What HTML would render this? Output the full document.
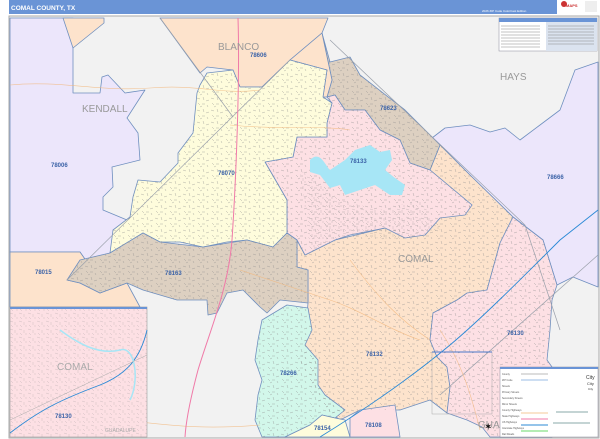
<!DOCTYPE html>
<html><head><meta charset="utf-8"><style>
html,body{margin:0;padding:0;background:#fff;}
body{width:600px;height:439px;overflow:hidden;position:relative;font-family:"Liberation Sans",sans-serif;}
svg{position:absolute;left:0;top:0;}
</style></head><body>
<svg width="600" height="439" viewBox="0 0 600 439" xmlns="http://www.w3.org/2000/svg" font-family="Liberation Sans, sans-serif">
<defs>
<pattern id="st" width="14" height="12" patternUnits="userSpaceOnUse">
<g stroke="#8a8a8a" stroke-width="0.45" fill="none" opacity="0.75">
<path d="M1,2 l3,1"/><path d="M7,1 l1,3"/><path d="M10,5 l3,-1"/><path d="M2,7 l2,2"/><path d="M6,8 l3,0"/><path d="M11,9 l1,2"/><path d="M4,11 l2,-1"/>
</g>
</pattern>
<pattern id="st2" width="9" height="8" patternUnits="userSpaceOnUse">
<g stroke="#888" stroke-width="0.45" fill="none" opacity="0.8">
<path d="M1,1 l3,1"/><path d="M6,2 l0,3"/><path d="M2,5 l2,2"/><path d="M7,6 l2,0"/>
</g>
</pattern>
</defs>
<rect x="0" y="0" width="600" height="439" fill="#fff"/>
<rect x="9" y="16" width="590" height="422" fill="#f2f2f2" stroke="#aaa" stroke-width="1"/>
<g stroke="#6f8fbf" stroke-width="0.8" stroke-linejoin="round">
<polygon fill="#ece6fb" points="10,18 73,18 73,93 100,93 102,77 108,75 125,93 145,90 127,118 138,133 140,160 112,167 113,187 103,197 103,210 127,220 110,253 87,262 80,252 10,252"/>
<polygon fill="#fde3cc" points="10,252 80,252 87,262 67,280 80,283 100,293 127,283 140,307 10,307"/>
<polygon fill="#fde3cc" points="160,18 328,18 322,33 290,60 262,87 240,87 233,70 207,67 200,73"/>
<polygon fill="#fde3cc" points="63,18 104,18 104,23 73,48"/>
<polygon fill="#ece6fb" points="432,138 445,128 470,125 490,132 505,128 520,140 540,125 560,110 575,70 598,62 598,287 573,277 557,285 543,240 513,217 470,175 440,145"/>
</g>
<g id="cz" stroke="#6f8fbf" stroke-width="0.8" stroke-linejoin="round">
<polygon fill="#fde3cc" points="297,240 305,255 335,240 385,228 425,235 440,218 472,205 460,195 430,170 440,145 470,175 513,217 500,243 487,290 457,300 433,313 430,340 437,357 447,367 450,387 447,413 430,400 400,410 360,410 340,420 320,405 310,385 300,360 305,340 308,303 308,270 297,267"/>
<polygon fill="#fde0e4" points="513,217 543,240 557,285 552,300 550,330 547,360 552,367 552,437 490,437 482,427 467,420 447,413 450,387 447,367 437,357 430,340 433,313 457,300 467,293 487,290 500,243"/>
<polygon fill="#ddd0c1" points="322,33 330,62 350,57 360,75 405,110 430,135 440,145 430,170 410,163 400,140 380,130 365,110 345,110 335,95 327,97 332,80"/>
<polygon fill="#fde3cc" points="290,60 322,33 332,80 327,97 323,97 327,70"/>
<polygon fill="#fde0e4" points="327,97 335,95 345,110 365,110 380,130 400,140 410,163 430,170 460,195 472,205 465,215 440,218 425,235 405,238 385,228 365,232 350,235 335,240 305,255 297,240 287,233 287,200 265,162 293,157 297,137 327,137 327,123 332,103"/>
<polygon fill="#fefcdc" points="197,93 200,85 207,73 233,70 240,87 262,87 290,60 327,70 323,97 332,103 327,123 327,137 297,137 293,157 265,162 287,200 287,233 273,247 247,240 227,242 203,247 180,242 160,242 143,233 110,253 113,230 130,217 133,197 138,180 160,182 178,163 178,153 193,133"/>
<polygon fill="#ddd0c1" points="67,280 80,260 110,253 143,233 160,242 203,247 247,240 273,247 287,233 297,240 297,267 308,270 308,303 280,300 267,313 260,307 243,290 227,293 217,313 208,315 207,300 177,300 143,290 127,283 100,293 80,283"/>
<polygon fill="#d2f7ea" points="262,320 287,305 308,308 312,330 305,345 318,360 318,385 325,395 345,410 335,418 322,415 310,425 285,437 262,437 255,420 258,395 262,380 255,360 258,340"/>
<polygon fill="#fefcdc" points="322,415 335,418 345,420 350,437 285,437 310,425"/>
<polygon fill="#fde0e4" points="350,418 360,410 395,405 400,437 350,437"/>
</g>
<g fill="url(#st)" stroke="none">
<polygon points="297,240 305,255 335,240 385,228 425,235 440,218 472,205 460,195 430,170 440,145 470,175 513,217 500,243 487,290 457,300 433,313 430,340 437,357 447,367 450,387 447,413 430,400 400,410 360,410 340,420 320,405 310,385 300,360 305,340 308,303 308,270 297,267"/>
<polygon points="513,217 543,240 557,285 552,300 550,330 547,360 552,367 552,437 490,437 482,427 467,420 447,413 450,387 447,367 437,357 430,340 433,313 457,300 467,293 487,290 500,243"/>
<polygon points="322,33 330,62 350,57 360,75 405,110 430,135 440,145 430,170 410,163 400,140 380,130 365,110 345,110 335,95 327,97 332,80"/>
<polygon points="327,97 335,95 345,110 365,110 380,130 400,140 410,163 430,170 460,195 472,205 465,215 440,218 425,235 405,238 385,228 365,232 350,235 335,240 305,255 297,240 287,233 287,200 265,162 293,157 297,137 327,137 327,123 332,103"/>
<polygon points="197,93 200,85 207,73 233,70 240,87 262,87 290,60 327,70 323,97 332,103 327,123 327,137 297,137 293,157 265,162 287,200 287,233 273,247 247,240 227,242 203,247 180,242 160,242 143,233 110,253 113,230 130,217 133,197 138,180 160,182 178,163 178,153 193,133"/>
<polygon points="67,280 80,260 110,253 143,233 160,242 203,247 247,240 273,247 287,233 297,240 297,267 308,270 308,303 280,300 267,313 260,307 243,290 227,293 217,313 208,315 207,300 177,300 143,290 127,283 100,293 80,283"/>
<polygon points="262,320 287,305 308,308 312,330 305,345 318,360 318,385 325,395 345,410 335,418 322,415 310,425 285,437 262,437 255,420 258,395 262,380 255,360 258,340"/>
</g>
<polygon fill="url(#st2)" opacity="0.6" points="300,170 340,200 380,210 420,200 440,230 400,240 350,236 310,250"/>
<path d="M310,160 C320,150 325,165 330,170 L345,160 355,150 370,145 380,152 390,150 392,160 385,170 395,178 405,185 402,195 390,195 375,185 360,190 345,195 340,185 330,188 320,175 310,172 Z" fill="#a7e6f6"/>
<g stroke="#9aa0aa" stroke-width="0.7" fill="none">
<line x1="160" y1="18" x2="233" y2="117"/>
<line x1="290" y1="60" x2="67" y2="280"/>
<line x1="330" y1="40" x2="525" y2="225"/>
<line x1="440" y1="395" x2="598" y2="255"/>
<line x1="525" y1="225" x2="560" y2="330"/>
</g>
<g fill="none" stroke-width="0.6" stroke="#f2b67a" opacity="0.8">
<path d="M10,85 C60,80 100,92 150,88 S220,95 260,90"/>
<path d="M230,125 C280,130 320,125 350,130"/>
<path d="M240,270 C270,280 300,290 330,300 S390,330 420,340"/>
<path d="M120,420 C170,425 200,430 260,425"/>
<path d="M440,330 C460,360 470,390 480,430"/>
<path d="M350,260 C380,300 400,320 430,340"/>
</g>
<path d="M238,18 C240,80 236,180 232,240 C228,290 210,330 198,370 C190,400 186,420 185,437" fill="none" stroke="#f07aa8" stroke-width="1"/>
<path d="M320,437 C380,400 420,370 450,345 C480,320 520,280 560,240 L598,210" fill="none" stroke="#2b8ad6" stroke-width="0.9"/>
<rect x="432" y="352" width="60" height="62" fill="none" stroke="#aaa" stroke-width="0.5"/>
<line x1="432" y1="352" x2="492" y2="352" stroke="#4a78c8" stroke-width="1"/>
<g fill="#999" font-size="10">
<text x="82" y="112">KENDALL</text>
<text x="218" y="50">BLANCO</text>
<text x="500" y="80">HAYS</text>
<text x="398" y="262">COMAL</text>
<text x="478" y="428">GUA</text>
</g>
<g fill="#3d64a8" font-size="6" font-weight="bold">
<text x="51" y="167">78006</text>
<text x="250" y="57">78606</text>
<text x="218" y="175">78070</text>
<text x="350" y="163">78133</text>
<text x="380" y="110">78623</text>
<text x="165" y="275">78163</text>
<text x="35" y="274">78015</text>
<text x="366" y="356">78132</text>
<text x="507" y="335">78130</text>
<text x="280" y="375">78266</text>
<text x="365" y="427">78108</text>
<text x="314" y="430">78154</text>
<text x="547" y="179">78666</text>
</g>
<rect x="10" y="307" width="137" height="130" fill="#fde0e4" stroke="#999" stroke-width="0.6"/>
<rect x="10" y="307" width="137" height="130" fill="url(#st2)" opacity="0.55"/>
<rect x="10" y="307" width="137" height="2" fill="#6a94d6"/>
<path d="M10,433 C40,410 60,400 100,385 C125,375 140,360 147,330" fill="none" stroke="#2b8ad6" stroke-width="0.9"/>
<path d="M60,330 C80,345 100,355 120,350 C135,345 140,380 130,400" fill="none" stroke="#a7e6f6" stroke-width="1.5"/>
<path d="M10,420 L147,355" stroke="#aaa" stroke-width="0.5"/>
<text x="57" y="370" font-size="10" fill="#aaa">COMAL</text>
<text x="55" y="418" font-size="6" font-weight="bold" fill="#3d64a8">78130</text>
<text x="105" y="432" font-size="5" fill="#aaa">GUADALUPE</text>
<rect x="9" y="0" width="548" height="14" fill="#6a94d6"/>
<text x="11" y="10" font-size="6.5" font-weight="bold" fill="#fff">COMAL COUNTY, TX</text>
<text x="482" y="12" font-size="3" fill="#fff">2026 ZIP Code ColorCast Edition</text>
<rect x="557" y="0" width="42" height="14" fill="#fff"/>
<circle cx="564" cy="4" r="3" fill="#c33"/>
<text x="566" y="7" font-size="4" fill="#c33" font-weight="bold">MAPS</text>
<rect x="585" y="1" width="12" height="11" fill="#eee"/>
<rect x="499" y="18" width="98" height="33" fill="#fff" stroke="#889" stroke-width="0.5"/>
<rect x="499" y="18" width="98" height="4" fill="#6a94d6"/>
<rect x="546" y="22" width="51" height="29" fill="#dbe3ef"/>
<g stroke="#888" stroke-width="0.6">
<line x1="501" y1="26" x2="540" y2="26"/><line x1="501" y1="29" x2="540" y2="29"/><line x1="501" y1="32" x2="540" y2="32"/><line x1="501" y1="35" x2="540" y2="35"/><line x1="501" y1="38" x2="540" y2="38"/><line x1="501" y1="41" x2="540" y2="41"/><line x1="501" y1="44" x2="540" y2="44"/><line x1="501" y1="47" x2="540" y2="47"/>
<line x1="548" y1="26" x2="594" y2="26"/><line x1="548" y1="29" x2="594" y2="29"/><line x1="548" y1="32" x2="594" y2="32"/><line x1="548" y1="35" x2="594" y2="35"/><line x1="548" y1="38" x2="594" y2="38"/><line x1="548" y1="41" x2="594" y2="41"/><line x1="548" y1="44" x2="594" y2="44"/>
</g>
<rect x="500" y="367" width="98" height="70" fill="#fff" stroke="#889" stroke-width="0.5"/>
<rect x="500" y="367" width="98" height="2" fill="#6a94d6"/>
<g stroke-width="1" fill="none">
<line x1="521" y1="374" x2="548" y2="374" stroke="#bbb"/>
<line x1="521" y1="380" x2="548" y2="380" stroke="#9bbde6"/>
<line x1="521" y1="413" x2="548" y2="413" stroke="#f6c99a"/>
<line x1="521" y1="419" x2="548" y2="419" stroke="#f07aa8"/>
<line x1="521" y1="425" x2="548" y2="425" stroke="#2b8ad6"/>
<line x1="521" y1="431" x2="548" y2="431" stroke="#6ada6a"/>
<line x1="556" y1="412" x2="588" y2="412" stroke="#8aa"/>
<line x1="553" y1="423" x2="590" y2="423" stroke="#8aa"/>
</g>
<g font-size="2.5" fill="#555">
<text x="502" y="375">County</text><text x="502" y="381">ZIP Code</text><text x="502" y="387">Streets</text><text x="502" y="393">Primary Streets</text><text x="502" y="399">Secondary Streets</text><text x="502" y="405">Minor Streets</text><text x="502" y="411">County Highways</text><text x="502" y="417">State Highways</text><text x="502" y="423">US Highways</text><text x="502" y="429">Interstate Highways</text><text x="502" y="435">Rail Roads</text>
</g>
<text x="586" y="379" font-size="5" fill="#333">City</text>
<text x="587" y="385" font-size="4" fill="#333">City</text>
<text x="588" y="390" font-size="3" fill="#333">City</text>
<text x="484" y="430" font-size="10" fill="#111">✶</text>
</svg>
</body></html>
